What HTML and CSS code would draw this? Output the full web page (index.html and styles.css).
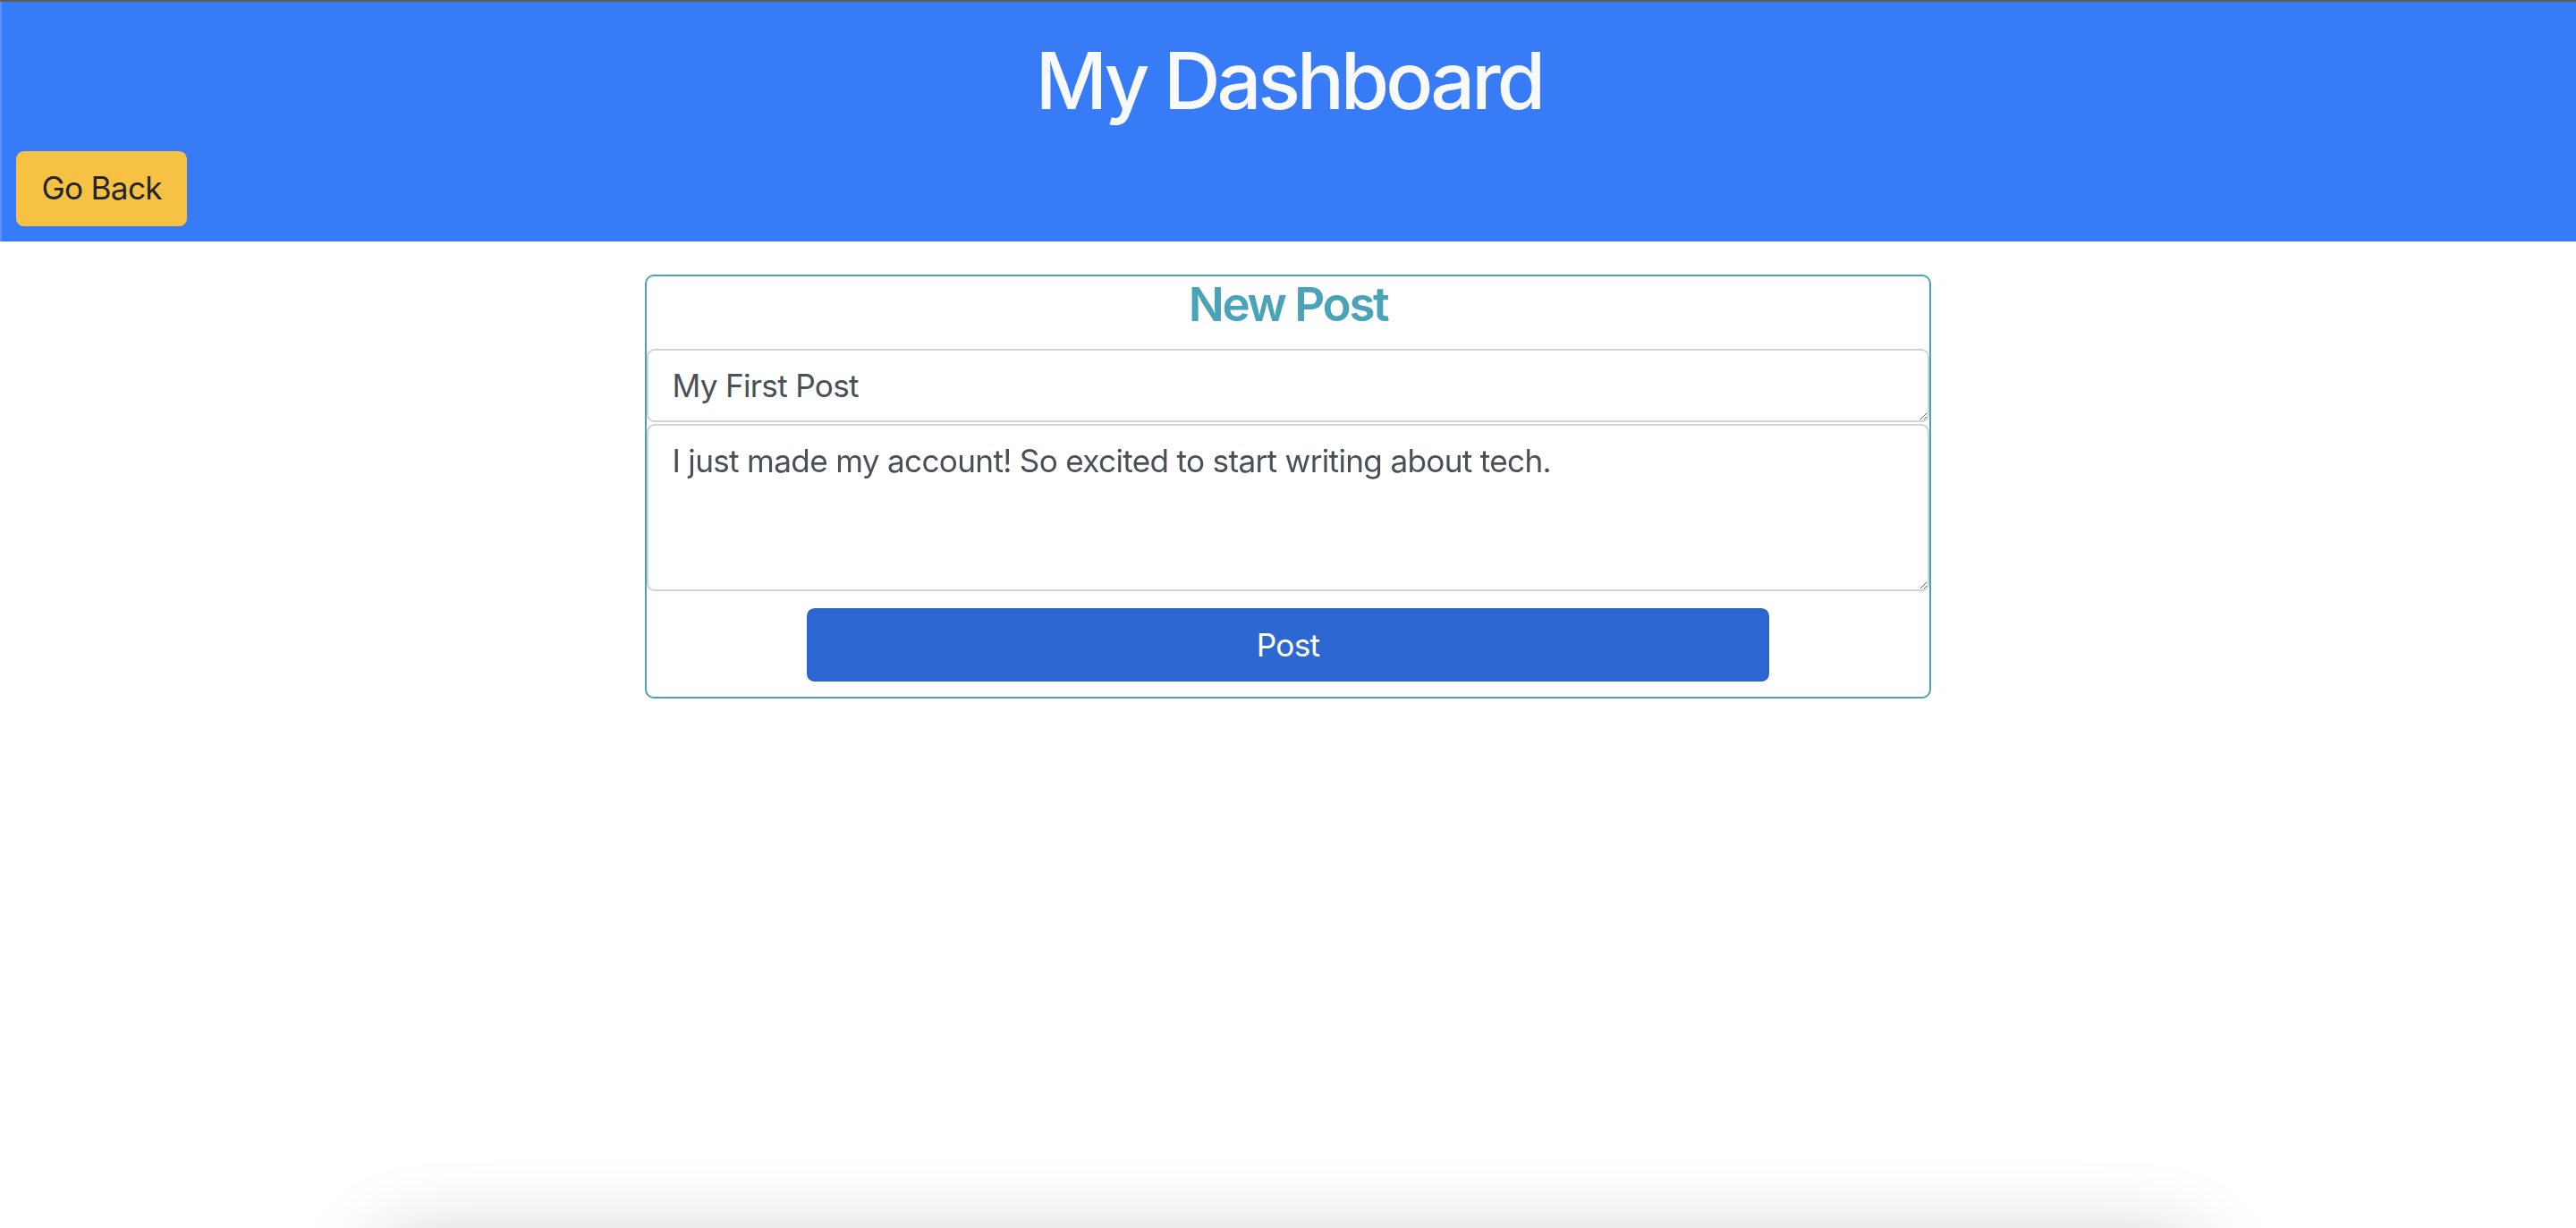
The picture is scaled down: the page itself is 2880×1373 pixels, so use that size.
FILE: index.html
```html
<!DOCTYPE html>
<html lang="en">
<head>
<meta charset="utf-8">
<title>My Dashboard</title>
<link rel="stylesheet" href="styles.css">
</head>
<body>
<header class="topbar">
  <h1 class="topbar-title">My Dashboard</h1>
  <button class="btn btn-back" type="button">Go Back</button>
</header>
<main class="content">
  <form class="post-card">
    <h4 class="post-card-title">New Post</h4>
    <textarea class="field field-title" rows="1">My First Post</textarea>
    <textarea class="field field-body" rows="3">I just made my account! So excited to start writing about tech.</textarea>
    <button class="btn btn-post" type="button">Post</button>
  </form>
</main>
<div class="window-shadow" aria-hidden="true"></div>
</body>
</html>
```

FILE: styles.css
```css
html, body {
  margin: 0;
  padding: 0;
  background: #ffffff;
}

body {
  font-family: "Inter", "Liberation Sans", sans-serif;
  color: #212529;
  border-top: 2px solid #5b5b5b;
  min-height: 1371px;
  overflow: hidden;
  letter-spacing: -0.02em;
}

.topbar {
  background: #377bf6;
  border-left: 2px solid #5a92f7;
  padding: 36px 0 17px;
  display: flex;
  flex-direction: column;
  align-items: flex-start;
}

.topbar-title {
  align-self: stretch;
  margin: 0 0 25px;
  text-align: center;
  font-size: 88px;
  line-height: 105.6px;
  font-weight: 500;
  letter-spacing: -0.045em;
  color: #f8f9fa;
}

.btn {
  font-family: inherit;
  font-size: 35.2px;
  line-height: 52.8px;
  letter-spacing: -0.02em;
  padding: 13.2px 26.4px;
  border-radius: 8.8px;
  cursor: pointer;
  box-sizing: border-box;
}

.btn-back {
  margin-left: 16px;
  height: 84px;
  background: #f7c244;
  border: 2px solid #f7c244;
  color: #212529;
}

.content {
  padding-top: 37px;
}

.post-card {
  width: 1438px;
  margin: 0 auto;
  box-sizing: border-box;
  border: 2px solid #4ba3b8;
  border-radius: 10px;
  display: flex;
  flex-direction: column;
  padding-bottom: 17px;
}

.post-card-title {
  margin: 0 0 17.6px;
  text-align: center;
  font-size: 52.8px;
  line-height: 63.4px;
  font-weight: 600;
  letter-spacing: -0.045em;
  color: #4ba3b8;
}

.field {
  display: block;
  width: 100%;
  box-sizing: border-box;
  margin: 0;
  font-family: inherit;
  font-size: 35.2px;
  line-height: 52.8px;
  letter-spacing: -0.02em;
  padding: 13.2px 26.4px;
  color: #495057;
  background: #ffffff;
  border: 2px solid #ced4da;
  border-radius: 8.8px;
  outline: none;
}

.field-title {
  height: 82px;
}

.field-body {
  margin-top: 2px;
  height: 187px;
}

.btn-post {
  width: 75%;
  height: 82px;
  margin: 19px auto 0;
  background: #2d67d1;
  border: 2px solid #2b63ca;
  color: #ffffff;
}

.window-shadow {
  position: fixed;
  left: 420px;
  right: 420px;
  top: 1388px;
  height: 200px;
  border-radius: 40px;
  box-shadow: 0 0 90px 0 rgba(0, 0, 0, 0.22);
  pointer-events: none;
}
```
